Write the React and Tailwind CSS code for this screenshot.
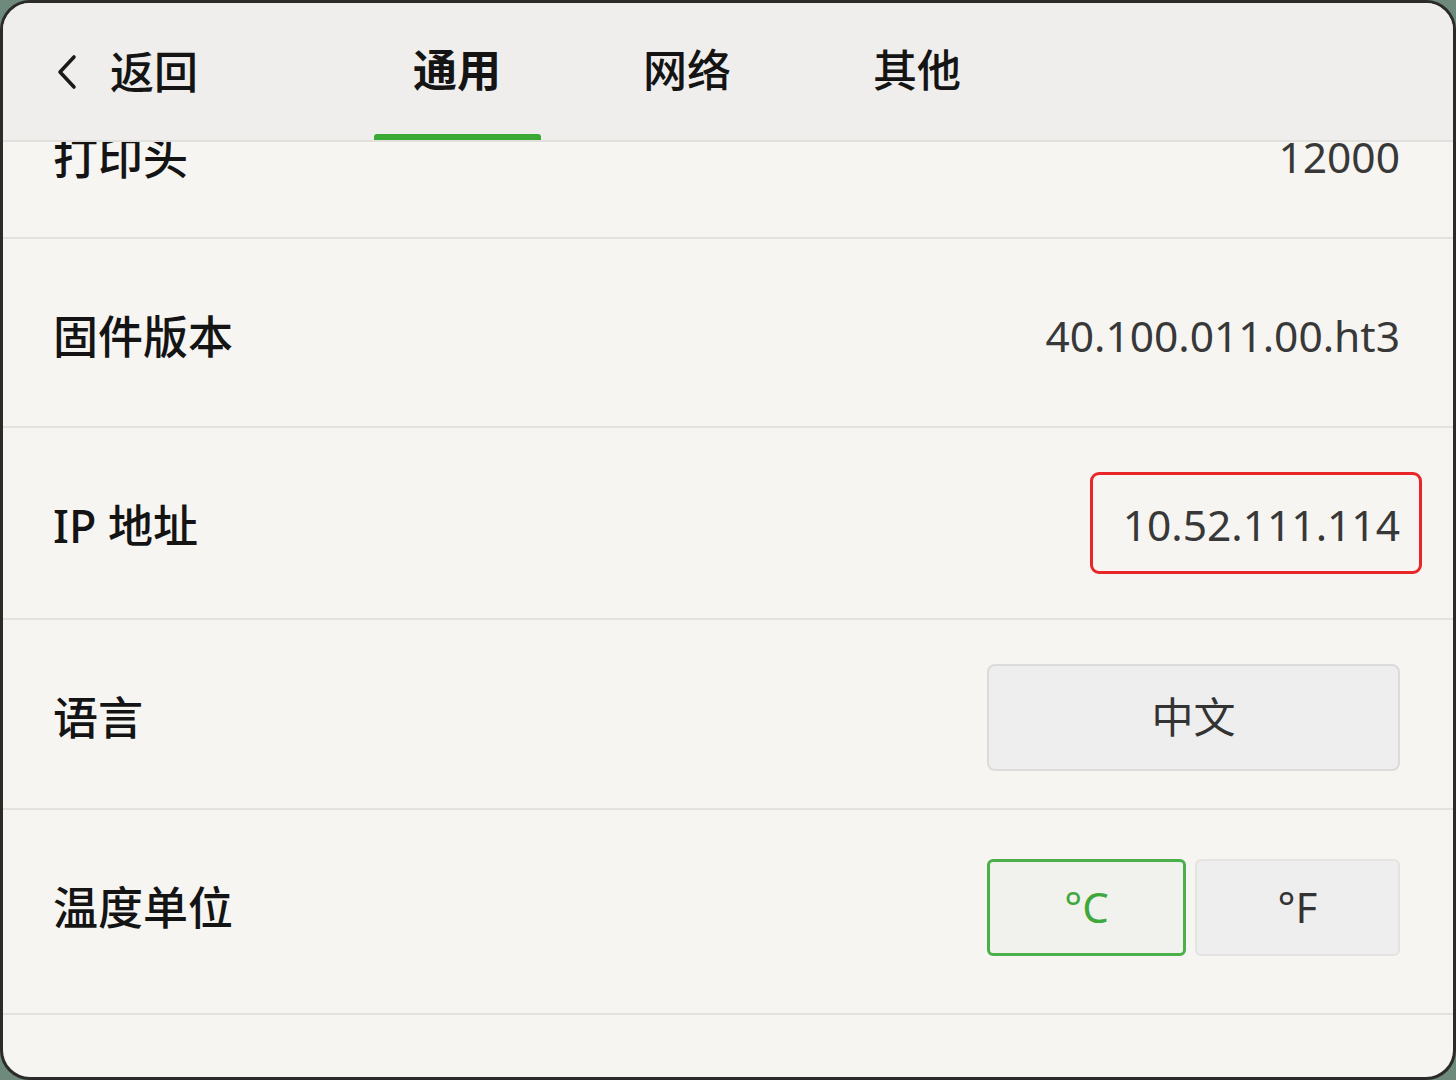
import React from "react";

const FONT = { fontFamily: '"Noto Sans", "Noto Sans CJK SC", sans-serif' };

function Chevron() {
  return (
    <svg width="24" height="36" viewBox="0 0 24 36" fill="none">
      <polyline
        points="19,3 5,18 19,33"
        stroke="#1a1a1a"
        strokeWidth="3.6"
        strokeLinecap="round"
        strokeLinejoin="round"
      />
    </svg>
  );
}

function Label({ children }) {
  return <span className="text-[45px] leading-none font-medium text-[#141414]">{children}</span>;
}

function Value({ children }) {
  return <span className="text-[42.5px] leading-none text-[#383838]">{children}</span>;
}

export default function App() {
  const tabs = ["通用", "网络", "其他"];
  return (
    <div className="w-[1456px] h-[1080px] bg-[#6e8a7c]" style={FONT}>
      <div className="w-full h-full rounded-[30px] border-[3px] border-[#2b2b2b] bg-[#f7f5f2] overflow-hidden flex flex-col">
        {/* header with back button and tabs */}
        <div className="h-[139px] shrink-0 bg-[#efeeec] border-b-2 border-[#e2e0dd] flex items-stretch pl-[52px]">
          <div className="flex items-center gap-[31px] w-[287px]">
            <Chevron />
            <span className="text-[44px] leading-none font-medium text-[#141414]">返回</span>
          </div>
          <div className="flex">
            {tabs.map((t, i) => (
              <div key={t} className="w-[230px] flex flex-col items-center justify-end">
                <div className="flex-1 flex items-center pt-[2px]">
                  <span className={`text-[44px] leading-none text-[#141414] ${i === 0 ? "font-semibold" : "font-medium"}`}>{t}</span>
                </div>
                <div className={`w-[167px] h-[6px] rounded-t-[3px] ${i === 0 ? "bg-[#3aaa35]" : "bg-transparent"}`} />
              </div>
            ))}
          </div>
        </div>

        {/* settings list, scrolled a little */}
        <div className="flex-1 overflow-hidden flex flex-col">
          <div className="h-[97px] shrink-0 overflow-hidden border-b-2 border-[#e4e2df]">
            <div className="h-[190px] -mt-[80px] flex items-center justify-between pl-[50px] pr-[53px]">
              <Label>打印头</Label>
              <Value>12000</Value>
            </div>
          </div>

          <div className="h-[189px] shrink-0 flex items-center justify-between pl-[50px] pr-[53px] border-b-2 border-[#e4e2df] pt-[8px]">
            <Label>固件版本</Label>
            <Value>40.100.011.00.ht3</Value>
          </div>

          <div className="h-[192px] shrink-0 flex items-center justify-between pl-[50px] pr-[53px] border-b-2 border-[#e4e2df] pt-[4px]">
            <Label>IP 地址</Label>
            <div className="relative">
              <Value>10.52.111.114</Value>
              <div className="absolute -top-[32px] -bottom-[27px] -left-[33px] -right-[22px] border-[3px] border-[#e8262a] rounded-[9px]" />
            </div>
          </div>

          <div className="h-[190px] shrink-0 flex items-center justify-between pl-[50px] pr-[53px] border-b-2 border-[#e4e2df] pt-[6px]">
            <Label>语言</Label>
            <div className="w-[413px] h-[107px] rounded-[8px] border-2 border-[#dcdbd9] bg-[#eeeeee] flex items-center justify-center">
              <span className="text-[42px] leading-none text-[#333333]">中文</span>
            </div>
          </div>

          <div className="h-[205px] shrink-0 flex items-start justify-between pl-[50px] pr-[53px] border-b-2 border-[#e4e2df]">
            <div className="h-[194px] flex items-center">
              <Label>温度单位</Label>
            </div>
            <div className="h-[194px] flex items-center gap-[9px]">
              <div className="w-[199px] h-[97px] rounded-[6px] border-[3px] border-[#4cb04a] bg-[#f1f2ee] flex items-center justify-center">
                <span className="text-[42px] leading-none text-[#3fa83c]">°C</span>
              </div>
              <div className="w-[205px] h-[97px] rounded-[6px] border-2 border-[#e4e3e1] bg-[#eeeeee] flex items-center justify-center">
                <span className="text-[42px] leading-none text-[#333333]">°F</span>
              </div>
            </div>
          </div>
        </div>
      </div>
    </div>
  );
}
